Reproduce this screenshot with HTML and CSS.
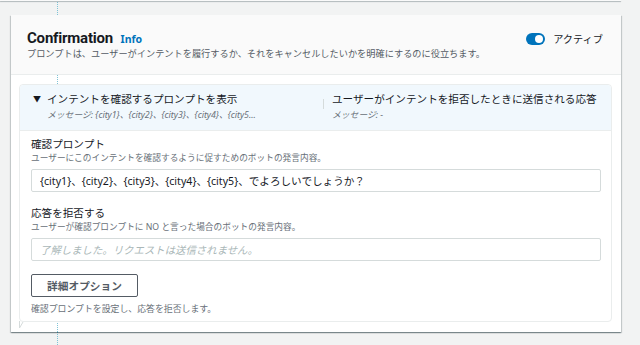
FILE: index.html
```html
<!DOCTYPE html>
<html lang="ja">

<head>
    <meta charset="UTF-8">
    <meta name="viewport" content="width=device-width, initial-scale=1.0">
    <title>Confirmation</title>

    <link rel="stylesheet" href="styles.css">
</head>

<body>

    <div class="page">
        <div class="prev-card"></div>

        <div class="card">
            <div class="card-header">
                <div class="header-text">
                    <h2>Confirmation <a href="#" class="info-link">Info</a></h2>
                    <p class="header-desc">プロンプトは、ユーザーがインテントを履行するか、それをキャンセルしたいかを明確にするのに役立ちます。</p>
                </div>
                <label class="toggle-wrap">
                    <span class="toggle"><span class="knob"></span></span>
                    <span class="toggle-label">アクティブ</span>
                </label>
            </div>

            <div class="card-body">
                <div class="prompt-box">
                    <div class="prompt-head">
                        <div class="head-col">
                            <div class="head-title"><span class="caret">▼</span>インテントを確認するプロンプトを表示</div>
                            <div class="head-sub">メッセージ: {city1}、{city2}、{city3}、{city4}、{city5…</div>
                        </div>
                        <div class="head-col head-right">
                            <div class="head-title">ユーザーがインテントを拒否したときに送信される応答</div>
                            <div class="head-sub">メッセージ: -</div>
                        </div>
                    </div>

                    <div class="prompt-body">
                        <div class="field">
                            <div class="field-label">確認プロンプト</div>
                            <div class="field-desc">ユーザーにこのインテントを確認するように促すためのボットの発言内容。</div>
                            <input type="text" class="text-input" value="{city1}、{city2}、{city3}、{city4}、{city5}、でよろしいでしょうか？">
                        </div>

                        <div class="field">
                            <div class="field-label">応答を拒否する</div>
                            <div class="field-desc">ユーザーが確認プロンプトに NO と言った場合のボットの発言内容。</div>
                            <input type="text" class="text-input" placeholder="了解しました。リクエストは送信されません。">
                        </div>

                        <button class="options-button">詳細オプション</button>
                        <div class="footer-desc">確認プロンプトを設定し、応答を拒否します。</div>
                    </div>

                    <svg class="tail" width="6" height="8" viewBox="0 0 6 8">
                        <path d="M0.5 0 V7 L4 1" fill="none" stroke="#d5dbdb" stroke-width="1" />
                    </svg>
                </div>
            </div>
        </div>
    </div>

</body>

</html>
```

FILE: styles.css
```css
body {
    font-family: "Noto Sans", "Noto Sans CJK JP", sans-serif;
    background-color: #f2f3f3;
    margin: 0;
    padding: 0;
    color: #16191f;
}

.page {
    position: relative;
    width: 610px;
    padding: 0 0 13px 11px;
}

/* dotted connector running behind the cards */
.page::before {
    content: "";
    position: absolute;
    left: 57px;
    top: 0;
    bottom: 0;
    border-left: 1px dotted #7fc3d6;
}

.prev-card {
    position: relative;
    margin-left: -11px;
    width: 621px;
    height: 1px;
    background-color: #fafafa;
    box-shadow: 0 1px 1px 0 rgba(0, 28, 36, 0.3);
    margin-bottom: 14px;
}

.card {
    position: relative;
    background-color: #fff;
    box-shadow: 0 1px 1px 0 rgba(0, 28, 36, 0.3), 1px 1px 1px 0 rgba(0, 28, 36, 0.15), -1px 1px 1px 0 rgba(0, 28, 36, 0.15);
}

.card-header {
    display: flex;
    justify-content: space-between;
    align-items: flex-start;
    background-color: #fafafa;
    border-bottom: 1px solid #eaeded;
    padding: 13px 16px 14px 16px;
}

h2 {
    margin: 0;
    font-family: Roboto, "Noto Sans", sans-serif;
    font-size: 15px;
    font-weight: 700;
    line-height: 20px;
    letter-spacing: -0.2px;
    color: #16191f;
}

.info-link {
    font-family: "Noto Sans", sans-serif;
    font-size: 10.5px;
    font-weight: 700;
    letter-spacing: 0;
    color: #0073bb;
    text-decoration: none;
    margin-left: 4px;
}

.header-desc {
    margin: -2px 0 0 0;
    font-size: 9.2px;
    line-height: 13px;
    color: #545b64;
    white-space: nowrap;
}

.toggle-wrap {
    display: flex;
    flex-shrink: 0;
    align-items: center;
    gap: 8px;
    margin-top: 3px;
    margin-right: 2px;
}

.toggle {
    display: flex;
    justify-content: flex-end;
    align-items: center;
    width: 19px;
    height: 12px;
    border-radius: 6px;
    background-color: #0073bb;
    padding: 0 2px;
    box-sizing: border-box;
}

.knob {
    width: 8px;
    height: 8px;
    border-radius: 50%;
    background-color: #fff;
}

.toggle-label {
    font-size: 10.2px;
    color: #16191f;
    white-space: nowrap;
}

.card-body {
    position: relative;
    padding: 9px 9px 10px 8px;
}

.card-body::before {
    content: "";
    position: absolute;
    left: 46px;
    top: 0;
    bottom: 0;
    border-left: 1px dotted #7fc3d6;
}

.prompt-box {
    position: relative;
    z-index: 1;
    background-color: #fff;
    border: 1px solid #eaeded;
    border-radius: 4px;
}

.tail {
    position: absolute;
    left: -1px;
    bottom: -8px;
}

.prompt-head {
    display: flex;
    box-sizing: border-box;
    height: 46px;
    background-color: #f1f8fd;
    border-bottom: 1px solid #eaeded;
    border-radius: 4px 4px 0 0;
    padding: 6px 0 0 13px;
}

.head-col {
    width: 290px;
}

.head-right {
    flex: 1;
    position: relative;
    padding-left: 9px;
}

.head-right::before {
    content: "";
    position: absolute;
    left: 0;
    top: 8px;
    height: 10px;
    border-left: 1px solid #d5dbdb;
}

.head-title {
    font-size: 10.6px;
    line-height: 16px;
    color: #16191f;
    white-space: nowrap;
}

.caret {
    display: inline-block;
    font-size: 8px;
    width: 14px;
    vertical-align: 1px;
    color: #16191f;
}

.head-sub {
    font-size: 8.8px;
    line-height: 16px;
    font-style: italic;
    color: #687078;
    padding-left: 14px;
    white-space: nowrap;
}

.head-right .head-sub {
    padding-left: 0;
}

.prompt-body {
    padding: 5px 10px 6px 11px;
}

.field {
    margin-bottom: 13px;
}

.field-label {
    font-size: 10.6px;
    line-height: 16px;
    color: #16191f;
}

.field-desc {
    font-size: 8.7px;
    line-height: 13px;
    color: #687078;
    margin-bottom: 4px;
    white-space: nowrap;
}

.text-input {
    display: block;
    width: 100%;
    height: 23px;
    box-sizing: border-box;
    border: 1px solid #d5dbdb;
    border-radius: 2px;
    padding: 0 8px;
    font-family: "Noto Sans", "Noto Sans CJK JP", sans-serif;
    font-size: 10.6px;
    color: #16191f;
    background-color: #fff;
}

.text-input::placeholder {
    color: #aab7b8;
    font-style: italic;
    font-size: 10.4px;
}

.options-button {
    display: block;
    width: 107px;
    height: 23px;
    margin-top: 14px;
    background-color: #fff;
    border: 1px solid #545b64;
    border-radius: 2px;
    font-family: "Noto Sans", "Noto Sans CJK JP", sans-serif;
    font-size: 10.7px;
    font-weight: 700;
    color: #545b64;
    padding: 0;
}

.field + .options-button {
    margin-top: 1px;
}

.footer-desc {
    margin-top: 5px;
    font-size: 8.9px;
    line-height: 13px;
    color: #687078;
}
```
